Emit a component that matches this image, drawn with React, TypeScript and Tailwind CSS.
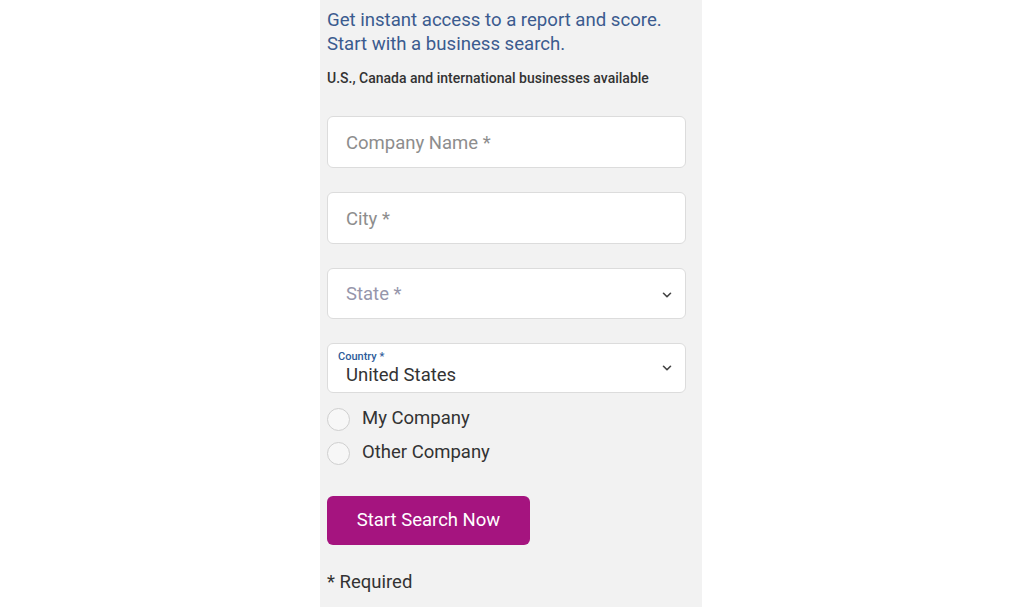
import React, { useState } from 'react';
import { ChevronDown } from 'lucide-react';

const font = { fontFamily: 'Roboto, "Liberation Sans", sans-serif' };

const TextField = ({ placeholder }: { placeholder: string }) => (
  <input
    type="text"
    placeholder={placeholder}
    className="w-full h-[52px] rounded-md border border-[#dcdcdc] bg-white pl-[18px] pr-3 pt-[2px] text-[18.5px] text-[#333] placeholder:text-[#8d8d8d] outline-none"
  />
);

const Radio = ({ label, checked, onClick }: { label: string; checked: boolean; onClick: () => void }) => (
  <button type="button" onClick={onClick} className="flex items-center h-[34px] text-left">
    <span className="w-[23px] h-[23px] rounded-full border border-[#cfcfcf] bg-[#f7f7f7] flex items-center justify-center">
      {checked && <span className="w-[11px] h-[11px] rounded-full bg-[#a5147f]" />}
    </span>
    <span className="ml-3 text-[18.5px] text-[#333]">{label}</span>
  </button>
);

export default function App() {
  const [who, setWho] = useState<'mine' | 'other' | null>(null);

  return (
    <div className="w-full h-[607px] bg-white flex pl-[320px] overflow-hidden" style={font}>
      <div className="w-[382px] h-full bg-[#f2f2f2] pl-[7px] pr-[16px] pt-[8px]">
        <h1 className="text-[18.6px] leading-[24px] text-[#3b5b8f]">
          Get instant access to a report and score.
          <br />
          Start with a business search.
        </h1>
        <p className="mt-[14px] text-[14px] leading-[16px] font-medium text-[#333]">
          U.S., Canada and international businesses available
        </p>

        <div className="mt-[30px] flex flex-col gap-[24px]">
          <TextField placeholder="Company Name *" />
          <TextField placeholder="City *" />
          <div className="w-full h-[51px] rounded-md border border-[#dcdcdc] bg-white pl-[18px] pr-[11px] pt-[3px] flex items-center justify-between">
            <span className="text-[18.5px] text-[#9696ab]">State *</span>
            <ChevronDown className="w-[14px] h-[14px] text-[#444]" strokeWidth={2.8} />
          </div>
        </div>

        <div className="mt-[24px] w-full h-[50px] rounded-md border border-[#dcdcdc] bg-white pl-[10px] pr-[11px] flex items-center justify-between">
          <div className="flex flex-col pt-[2px]">
            <span className="text-[11px] leading-[12px] font-medium text-[#2e5c9a]">Country *</span>
            <span className="pl-[8px] text-[18.5px] leading-[24px] text-[#333]">United States</span>
          </div>
          <ChevronDown className="w-[14px] h-[14px] text-[#444]" strokeWidth={2.8} />
        </div>

        <div className="mt-[9px] flex flex-col">
          <Radio label="My Company" checked={who === 'mine'} onClick={() => setWho('mine')} />
          <Radio label="Other Company" checked={who === 'other'} onClick={() => setWho('other')} />
        </div>

        <button
          type="button"
          className="mt-[26px] w-[203px] h-[49px] rounded-md bg-[#a5147f] text-white text-[18.5px]"
        >
          Start Search Now
        </button>

        <p className="mt-[25px] text-[18.5px] leading-[24px] text-[#333]">* Required</p>
      </div>
    </div>
  );
}
